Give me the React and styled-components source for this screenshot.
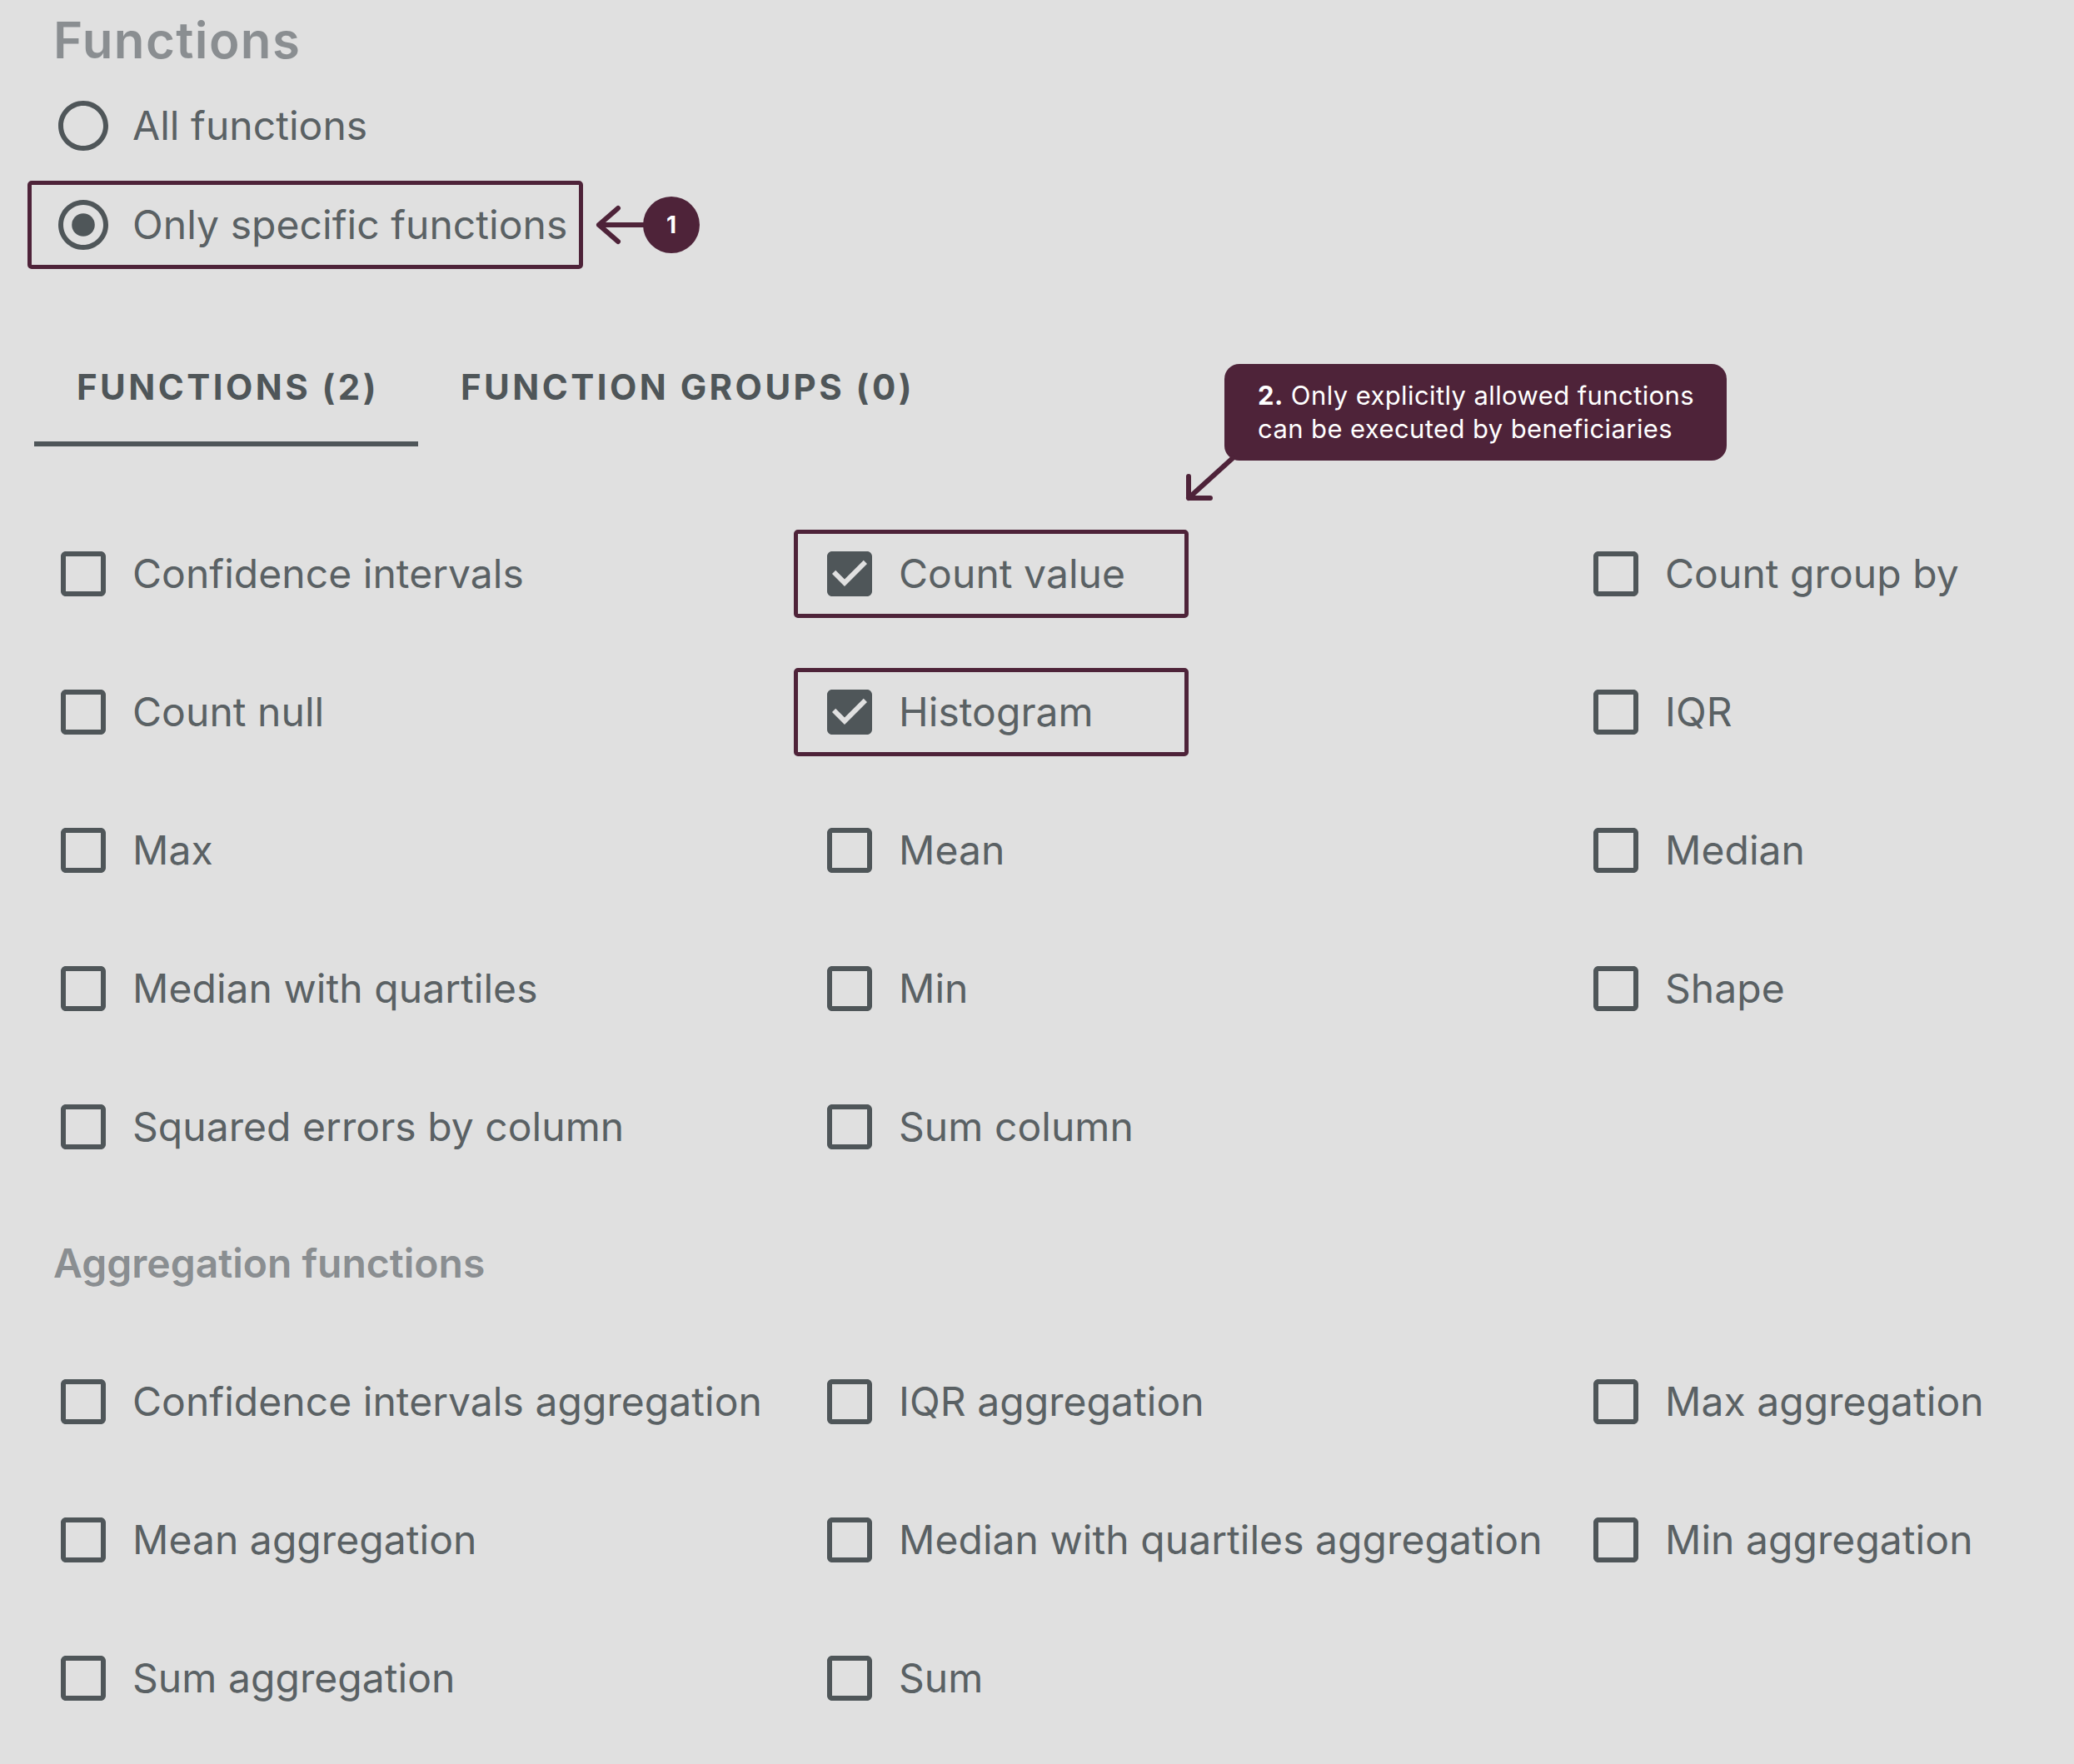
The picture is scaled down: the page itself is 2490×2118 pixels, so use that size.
import React from 'react';
import styled, { createGlobalStyle } from 'styled-components';

const MAROON = '#4e2339';
const INK = '#4f5659';
const TEXT = '#5a6164';
const MUTED = '#8a8e91';

const GlobalStyle = createGlobalStyle`
  html, body { margin: 0; padding: 0; background: #e0e0e0; }
  body { font-family: Inter, "Noto Sans", "Liberation Sans", sans-serif; -webkit-font-smoothing: antialiased; }
`;

const Page = styled.main`
  width: 100%;
  min-height: 2118px;
  box-sizing: border-box;
  padding: 12px 0 20px 41px;
  display: flex;
  flex-direction: column;
  overflow: hidden;
`;

const Indent = styled.div`
  padding-left: 23px;
  display: flex;
  flex-direction: column;
`;

const SectionTitle = styled.h2`
  margin: ${p => p.$mt}px 0 0;
  font-size: ${p => p.$size}px;
  line-height: ${p => p.$lh}px;
  letter-spacing: ${p => p.$ls || 0}px;
  font-weight: 600;
  color: ${MUTED};
`;

const RadioGroup = styled.div`
  display: flex;
  flex-direction: column;
  gap: 47px;
  margin-top: 31px;
`;

const OptionLabel = styled.label`
  position: relative;
  display: flex;
  align-items: center;
  gap: 23px;
  height: 72px;
  font-size: 48px;
  line-height: 58px;
  letter-spacing: 0.05px;
  color: ${TEXT};
  white-space: nowrap;
`;

const Icon = styled.svg`
  width: 72px;
  height: 72px;
  flex: none;
  fill: ${INK};
`;

const Highlight = styled.span`
  position: absolute;
  left: -31px;
  top: 50%;
  margin-top: -53px;
  height: 106px;
  width: ${p => p.$w}px;
  box-sizing: border-box;
  border: 5px solid ${MAROON};
  border-radius: 5px;
  pointer-events: none;
`;

const Marker = styled.span`
  position: absolute;
  left: 651px;
  top: 50%;
  transform: translateY(-50%);
  display: flex;
  align-items: center;
`;

const MarkerDot = styled.span`
  width: 68px;
  height: 68px;
  border-radius: 50%;
  background: ${MAROON};
  color: #fff;
  font-size: 28px;
  font-weight: 700;
  display: flex;
  align-items: center;
  justify-content: center;
  margin-left: -1px;
`;

const TabBar = styled.div`
  position: relative;
  display: flex;
  height: 144px;
  margin-top: 86px;
`;

const Tab = styled.button`
  appearance: none;
  background: none;
  border: 0;
  border-bottom: 6px solid ${p => (p.$active ? INK : 'transparent')};
  box-sizing: border-box;
  height: 144px;
  padding: 6px 47px 0 51px;
  font-family: inherit;
  font-size: 42px;
  font-weight: 700;
  letter-spacing: 0.082em;
  color: ${INK};
  text-transform: uppercase;
  white-space: nowrap;
  cursor: pointer;
`;

const Callout = styled.div`
  position: absolute;
  left: 1429px;
  top: 45px;
  width: 603px;
  box-sizing: border-box;
  padding: 18px 40px;
  background: ${MAROON};
  border-radius: 18px;
  color: #fff;
  font-size: 31px;
  line-height: 40px;
  letter-spacing: 0.4px;
  white-space: nowrap;
  b { font-weight: 700; }
`;

const CalloutArrow = styled.svg`
  position: absolute;
  left: -50px;
  top: 105px;
  width: 70px;
  height: 70px;
  overflow: visible;
`;

const Grid = styled.div`
  display: grid;
  grid-template-columns: 920px 920px 1fr;
  grid-auto-rows: 166px;
  margin-top: ${p => p.$mt}px;
  align-items: center;
`;

const CheckboxIcon = ({ checked }) => (
  <Icon viewBox="0 0 24 24" aria-hidden="true">
    {checked ? (
      <path d="M19 3H5c-1.11 0-2 .9-2 2v14c0 1.1.89 2 2 2h14c1.1 0 2-.9 2-2V5c0-1.1-.9-2-2-2zm-9 14l-5-5 1.41-1.41L10 14.17l7.59-7.59L19 8l-9 9z" />
    ) : (
      <path d="M19 5v14H5V5h14m0-2H5c-1.11 0-2 .9-2 2v14c0 1.1.89 2 2 2h14c1.1 0 2-.9 2-2V5c0-1.1-.9-2-2-2z" />
    )}
  </Icon>
);

const RadioIcon = ({ checked }) => (
  <Icon viewBox="0 0 24 24" aria-hidden="true">
    <path d="M12 2C6.48 2 2 6.48 2 12s4.48 10 10 10 10-4.480 10-10S17.52 2 12 2zm0 18c-4.42 0-8-3.58-8-8s3.58-8 8-8 8 3.58 8 8-3.58 8-8 8z" />
    {checked && <circle cx="12" cy="12" r="4.6" />}
  </Icon>
);

const functions = [
  { label: 'Confidence intervals' },
  { label: 'Count value', checked: true },
  { label: 'Count group by' },
  { label: 'Count null' },
  { label: 'Histogram', checked: true },
  { label: 'IQR' },
  { label: 'Max' },
  { label: 'Mean' },
  { label: 'Median' },
  { label: 'Median with quartiles' },
  { label: 'Min' },
  { label: 'Shape' },
  { label: 'Squared errors by column' },
  { label: 'Sum column' },
];

const aggregations = [
  { label: 'Confidence intervals aggregation' },
  { label: 'IQR aggregation' },
  { label: 'Max aggregation' },
  { label: 'Mean aggregation' },
  { label: 'Median with quartiles aggregation' },
  { label: 'Min aggregation' },
  { label: 'Sum aggregation' },
  { label: 'Sum' },
];

const CheckList = ({ items, mt }) => (
  <Grid $mt={mt}>
    {items.map(item => (
      <OptionLabel key={item.label}>
        {item.checked && <Highlight $w={474} />}
        <CheckboxIcon checked={item.checked} />
        {item.label}
      </OptionLabel>
    ))}
  </Grid>
);

export default function App() {
  return (
    <>
      <GlobalStyle />
      <Page>
        <Indent>
          <SectionTitle $size={60} $lh={72} $mt={0} $ls={1.4}>Functions</SectionTitle>
          <RadioGroup>
            <OptionLabel>
              <RadioIcon />
              All functions
            </OptionLabel>
            <OptionLabel>
              <Highlight $w={667} />
              <RadioIcon checked />
              Only specific functions
              <Marker>
                <svg width="58" height="48" viewBox="0 0 58 48" aria-hidden="true">
                  <path d="M27 4 L4 24 L27 44 M4 24 H58" fill="none" stroke={MAROON} strokeWidth="6" strokeLinecap="round" strokeLinejoin="round" />
                </svg>
                <MarkerDot>1</MarkerDot>
              </Marker>
            </OptionLabel>
          </RadioGroup>
        </Indent>

        <TabBar>
          <Tab $active>Functions (2)</Tab>
          <Tab>Function groups (0)</Tab>
          <Callout>
            <CalloutArrow viewBox="0 0 70 70" aria-hidden="true">
              <path d="M60 8 L7 56 M7 30 L7 56 L33 56" fill="none" stroke={MAROON} strokeWidth="6" strokeLinecap="round" strokeLinejoin="round" />
            </CalloutArrow>
            <b>2.</b> Only explicitly allowed functions
            <br />
            can be executed by beneficiaries
          </Callout>
        </TabBar>

        <Indent>
          <CheckList items={functions} mt={70} />
          <SectionTitle $size={48} $lh={58} $mt={52}>Aggregation functions</SectionTitle>
          <CheckList items={aggregations} mt={54} />
        </Indent>
      </Page>
    </>
  );
}
